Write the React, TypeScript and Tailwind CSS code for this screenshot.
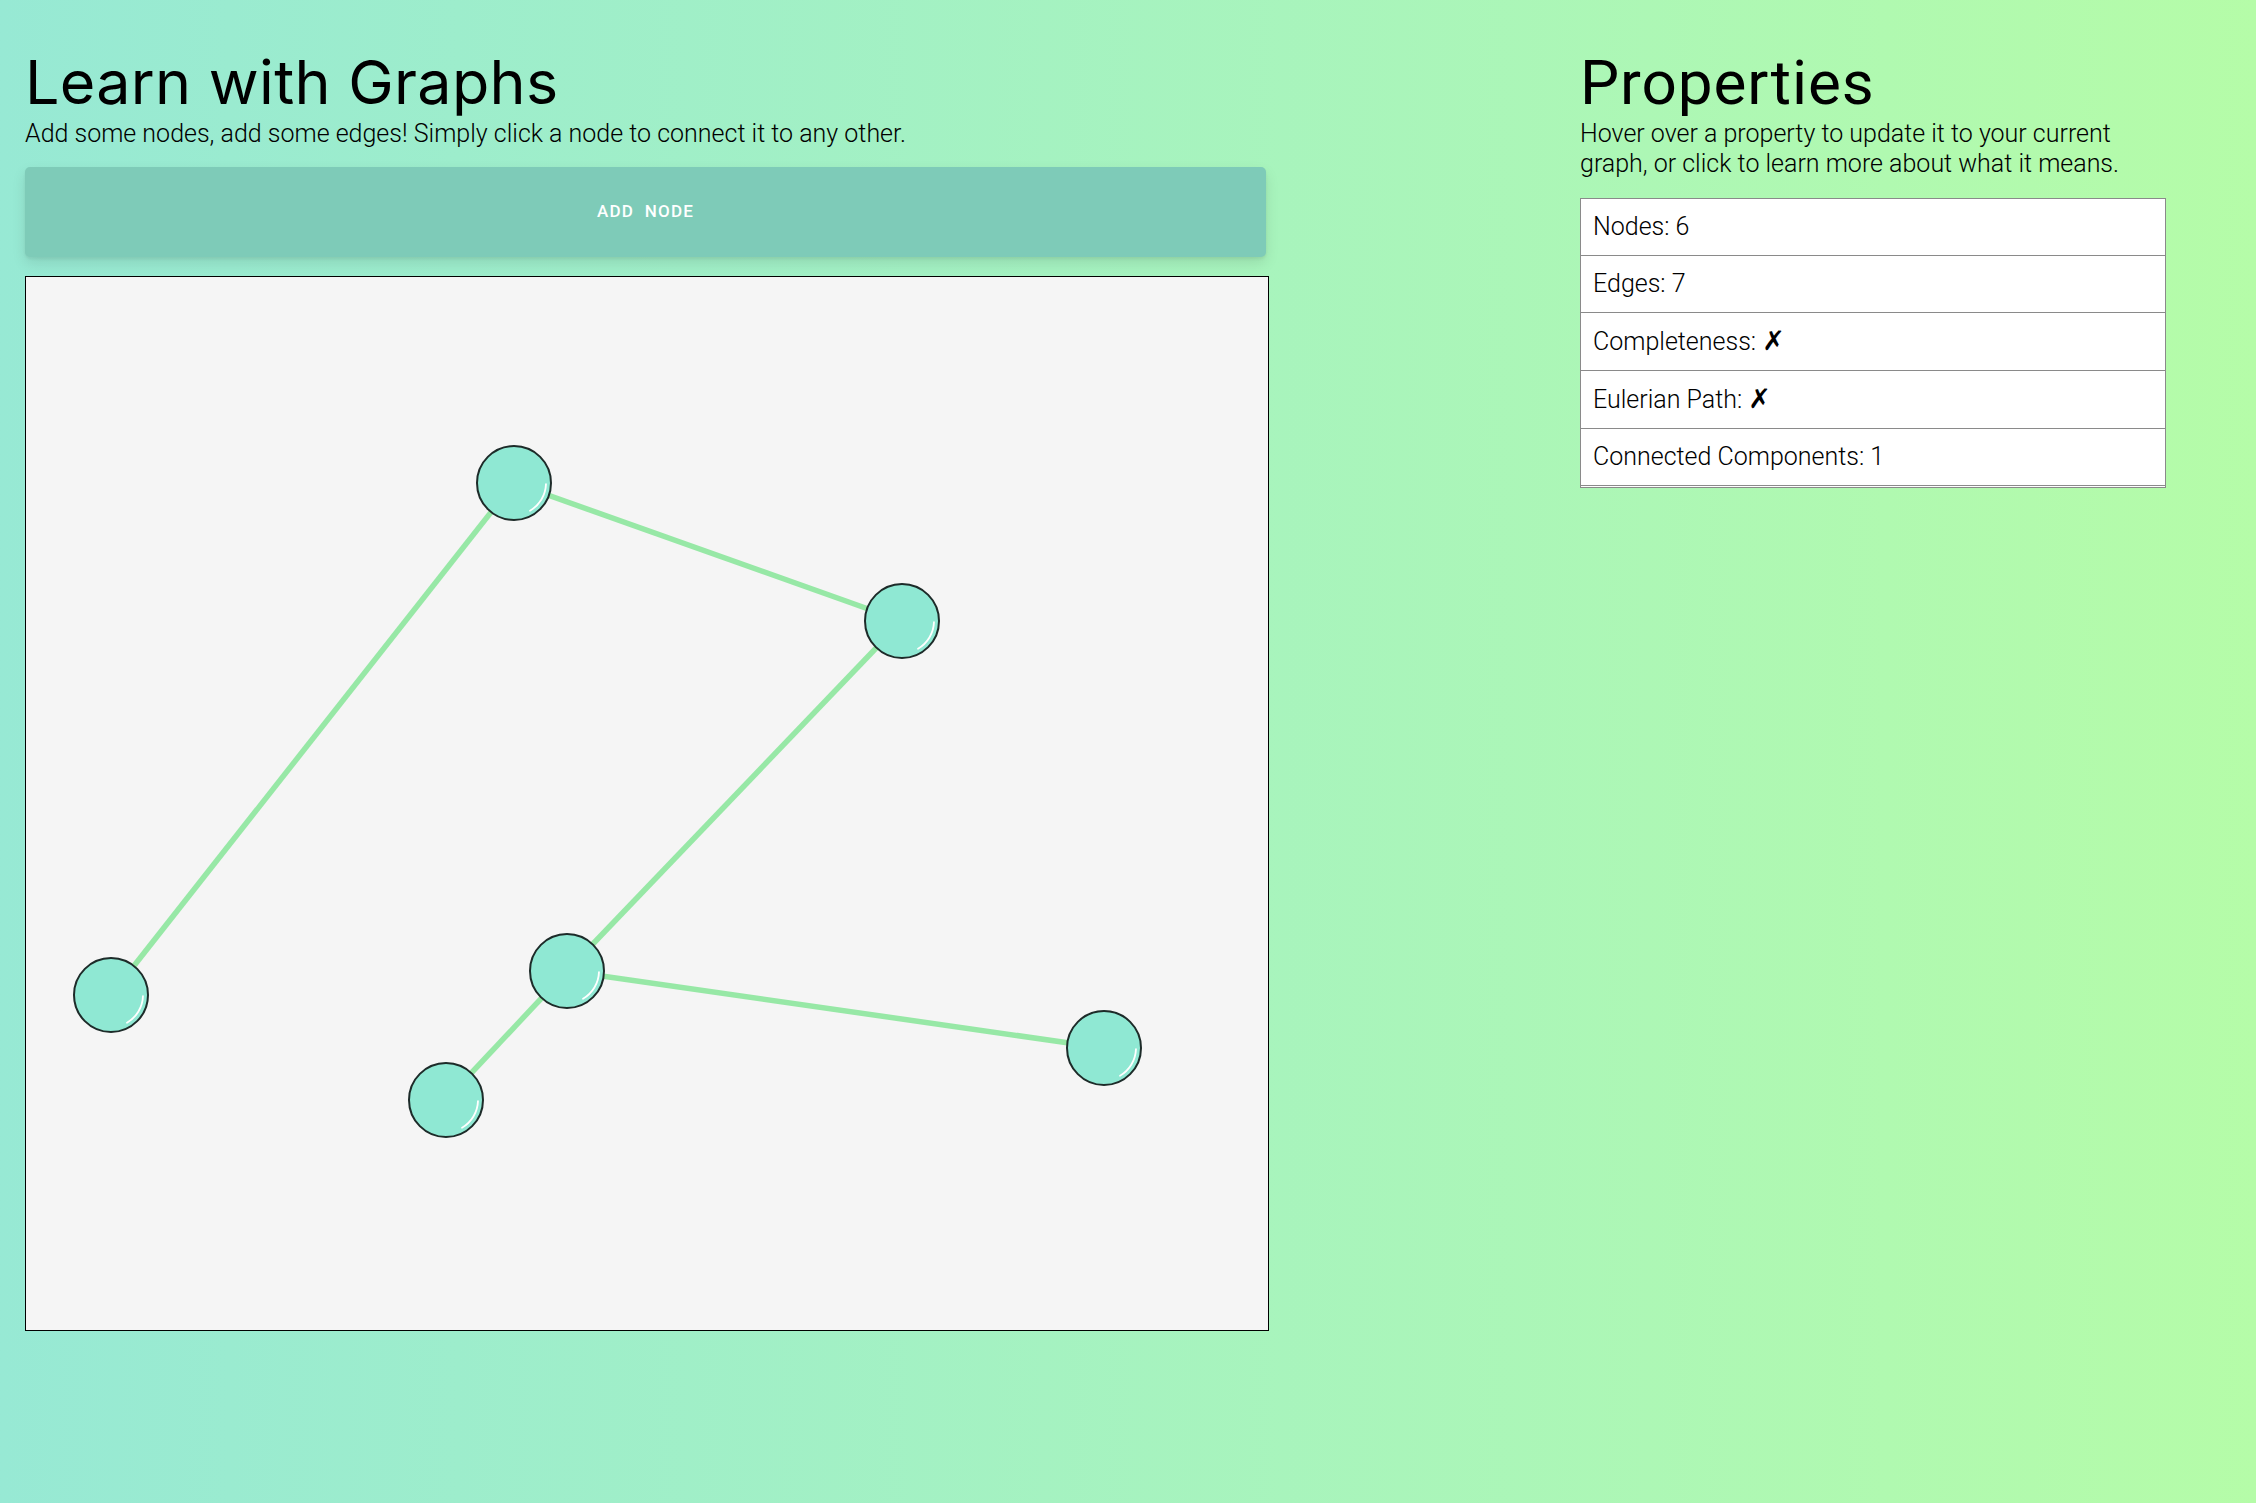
import React from 'react';

type GraphNode = { id: number; x: number; y: number };

// node centres, relative to the drawing area
const nodes: GraphNode[] = [
  { id: 1, x: 488, y: 206 },
  { id: 2, x: 876, y: 344 },
  { id: 3, x: 85, y: 718 },
  { id: 4, x: 541, y: 694 },
  { id: 5, x: 420, y: 823 },
  { id: 6, x: 1078, y: 771 },
];

const edges: [number, number][] = [
  [1, 3],
  [1, 2],
  [2, 4],
  [4, 5],
  [4, 6],
];

const R = 37;

const byId = (id: number) => nodes.find((n) => n.id === id)!;

// little white shine on the lower right of each node
const shine = (cx: number, cy: number) => {
  const r = 32;
  const a0 = (2 * Math.PI) / 180;
  const a1 = (60 * Math.PI) / 180;
  const x0 = cx + r * Math.cos(a0);
  const y0 = cy + r * Math.sin(a0);
  const x1 = cx + r * Math.cos(a1);
  const y1 = cy + r * Math.sin(a1);
  return `M ${x0} ${y0} A ${r} ${r} 0 0 1 ${x1} ${y1}`;
};

const GraphCanvas: React.FC = () => (
  <div className="w-[1244px] h-[1055px] mt-[19px] bg-[#f5f5f5] border border-black">
    <svg width="1242" height="1053" className="block">
      {edges.map(([a, b], i) => {
        const na = byId(a);
        const nb = byId(b);
        return (
          <line
            key={i}
            x1={na.x}
            y1={na.y}
            x2={nb.x}
            y2={nb.y}
            stroke="#97e8a6"
            strokeWidth={5.5}
          />
        );
      })}
      {nodes.map((n) => (
        <g key={n.id}>
          <circle cx={n.x} cy={n.y} r={R} fill="#8fe8d3" stroke="#1d2b29" strokeWidth={2} />
          <path d={shine(n.x, n.y)} fill="none" stroke="#ffffff" strokeWidth={1.8} strokeLinecap="round" />
        </g>
      ))}
    </svg>
  </div>
);

const Cross = () => (
  <span className="font-['DejaVu_Sans',sans-serif] text-[27px] leading-[28px] font-bold">✗</span>
);

const properties: { label: string; value: React.ReactNode }[] = [
  { label: 'Nodes', value: '6' },
  { label: 'Edges', value: '7' },
  { label: 'Completeness', value: <Cross /> },
  { label: 'Eulerian Path', value: <Cross /> },
  { label: 'Connected Components', value: '1' },
];

export default function App() {
  return (
    <div className="min-h-[1503px] w-full bg-gradient-to-r from-[#97e9d4] to-[#b5fca8] font-['Roboto',sans-serif] text-black">
      <div className="flex pl-[25px] pt-[52px]">
        {/* left: the graph playground */}
        <div className="w-[1244px] flex flex-col">
          <h1 className="font-['Inter',sans-serif] text-[61px] leading-[61px] font-normal tracking-[0.005em] mb-[6px]">
            Learn with Graphs
          </h1>
          <p className="text-[25px] leading-[30px] font-light">
            Add some nodes, add some edges! Simply click a node to connect it to any other.
          </p>
          <button className="mt-[18px] w-[1241px] h-[90px] rounded-[5px] bg-[#7ecbb8] text-white text-[17px] font-medium tracking-[0.07em] uppercase shadow-[0_6px_14px_rgba(0,0,0,0.10),0_2px_3px_rgba(0,0,0,0.06)] whitespace-pre">
            ADD  NODE
          </button>
          <GraphCanvas />
        </div>

        {/* right: graph properties */}
        <div className="ml-[311px] w-[586px] flex flex-col">
          <h2 className="text-[62px] leading-[62px] font-normal tracking-[0.015em] mb-[5px]">Properties</h2>
          <p className="text-[25px] leading-[30px] font-light">
            Hover over a property to update it to your current graph, or click to learn more about what it means.
          </p>
          <div className="mt-[19px] border border-[#8a8a8a] bg-white pb-px">
            {properties.map((p) => (
              <div
                key={p.label}
                className="px-3 py-[14px] text-[25px] leading-[28px] font-light border-b border-[#8a8a8a] bg-white cursor-pointer"
              >
                {p.label}: {p.value}
              </div>
            ))}
          </div>
        </div>
      </div>
    </div>
  );
}
